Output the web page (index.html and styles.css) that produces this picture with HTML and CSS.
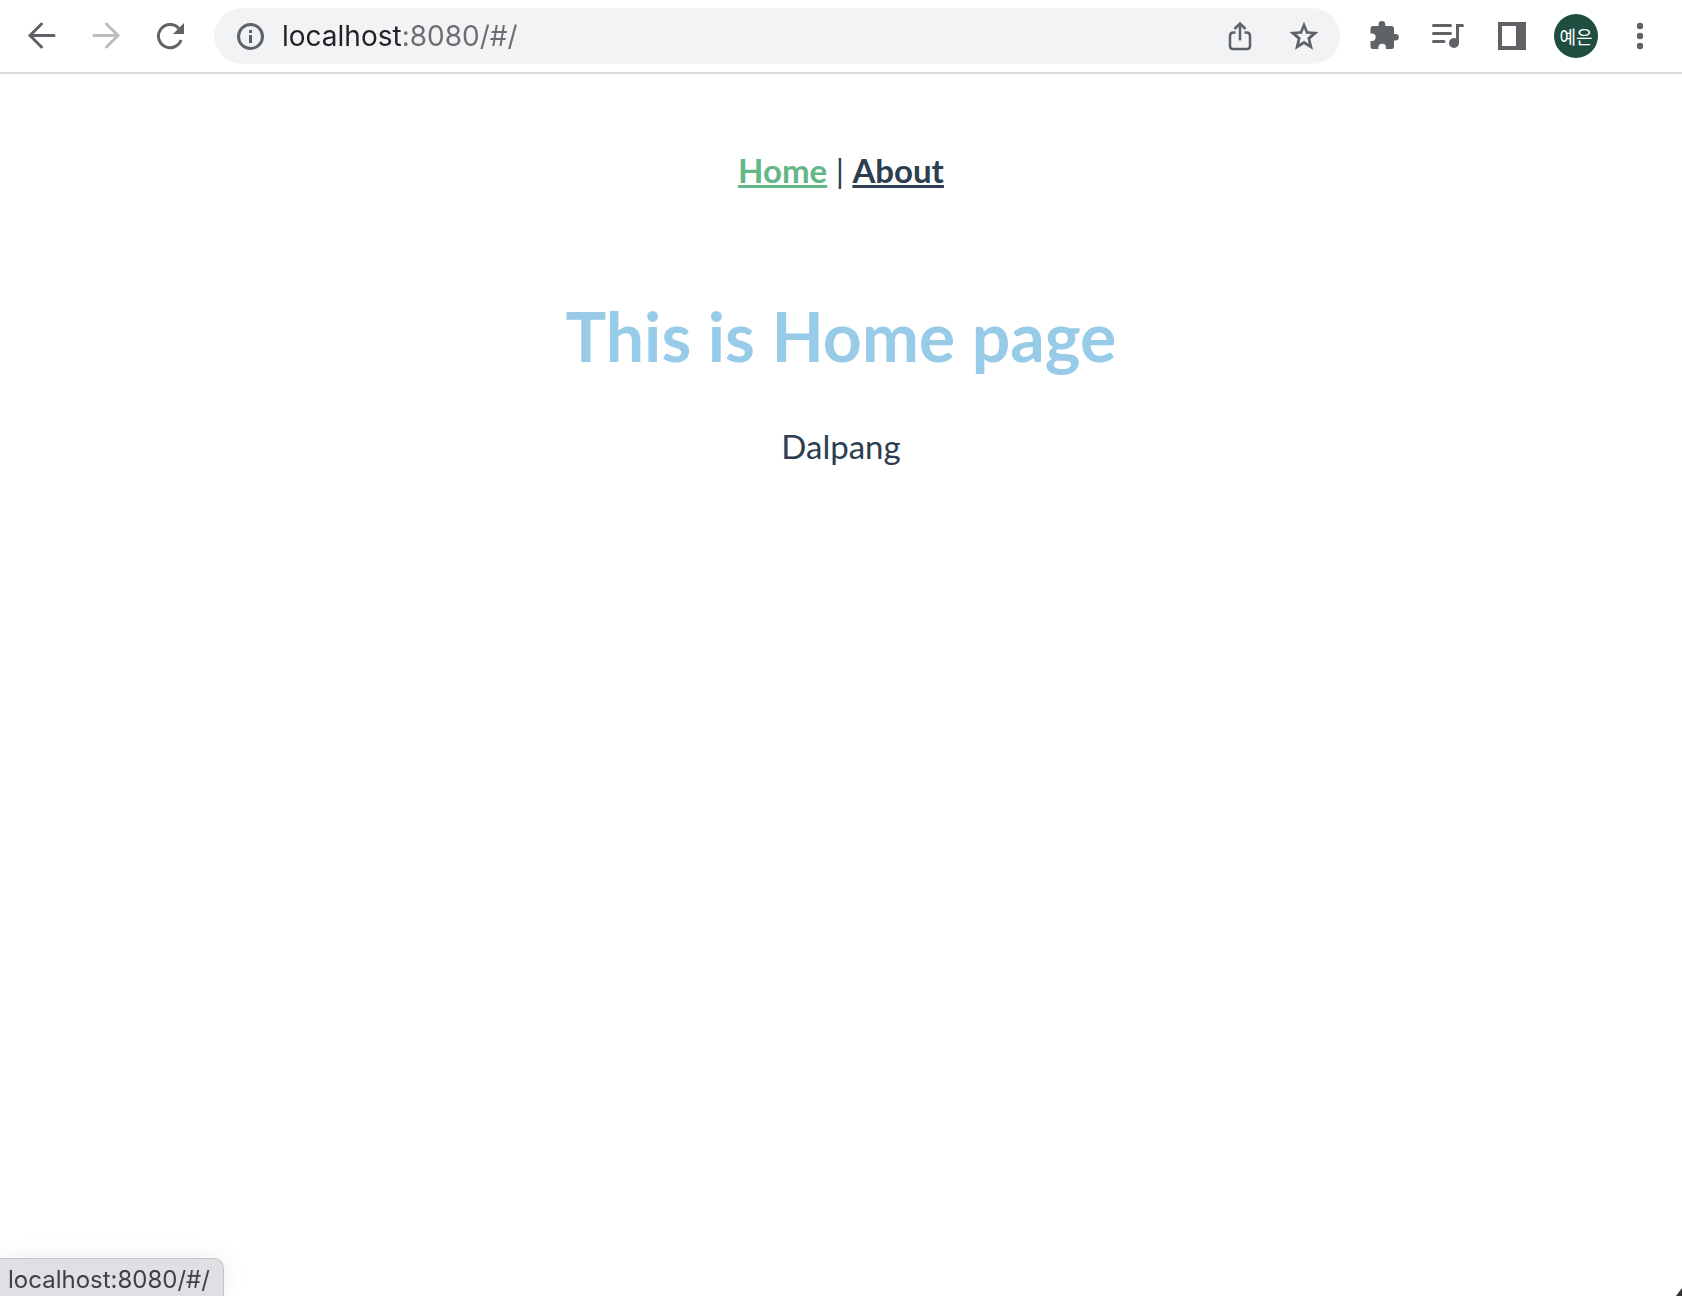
FILE: index.html
```
<!DOCTYPE html>
<html lang="en">
<head>
    <meta charset="UTF-8">
    <meta name="viewport" content="width=device-width, initial-scale=1.0">
    <title>Home</title>
    <link rel="stylesheet" href="styles.css">
</head>
<body>

<header class="toolbar">
    <button class="tool" aria-label="Back">
        <svg viewBox="0 0 32 32" class="stroke"><path d="M28 15.500H5M15.500 4 4 15.500 15.500 27"/></svg>
    </button>
    <button class="tool" aria-label="Forward" disabled>
        <svg viewBox="0 0 32 32" class="stroke"><path d="M4 15.500H27M16.500 4 28 15.500 16.500 27"/></svg>
    </button>
    <button class="tool" aria-label="Reload">
        <svg viewBox="0 0 32 32"><path class="line" d="M27 20A11.600 11.600 0 1 1 24.800 8.500"/><path d="M30 3V14H19z"/></svg>
    </button>

    <form class="omnibox">
        <button type="button" class="omni-btn" aria-label="Site information">
            <svg viewBox="0 0 32 32"><circle class="line" cx="16.500" cy="16.500" r="12"/><path d="M15 10h3v3h-3zM15 15h3v8h-3z"/></svg>
        </button>
        <input class="url" type="text" aria-label="Address" value="localhost:8080/#/">
        <button type="button" class="omni-btn wide" aria-label="Share">
            <svg viewBox="0 0 32 32"><path class="line thin" d="M11.500 12.500H9.500Q6 12.500 6 16V26Q6 29 9 29H23Q26 29 26 26V16Q26 12.500 22.500 12.500H20.500M16 20.500V4M10.500 9 16 3.500 21.500 9"/></svg>
        </button>
        <button type="button" class="omni-btn wide" aria-label="Bookmark">
            <svg viewBox="0 0 32 32"><path fill-rule="evenodd" d="M16 1.500 19.900 11.200 30.500 12 22.400 18.900 25 29.700 16 24.200 7 29.700 9.600 18.900 1.500 12 12.100 11.200zM16 8.500 13.900 13.700 8.400 14.100 12.600 17.800 11.300 23.700 16 20.800 20.700 23.700 19.400 17.800 23.600 14.100 18.100 13.700z"/></svg>
        </button>
    </form>

    <button class="tool" aria-label="Extensions">
        <svg viewBox="0 0 32 32"><path d="M4.500 6H10.500V4.500A3.400 3.400 0 0 1 17.300 4.500V6H23.500Q26 6 26 8.500V14H27.500A3.300 3.300 0 0 1 27.500 20.600H26V26.500Q26 29 23.500 29H18V27.500A3.800 3.800 0 0 0 10.400 27.500V29H4.500Q2.500 29 2.500 26.500V21H4A3.700 3.700 0 0 0 4 13.600H2.500V8.500Q2.500 6 4.500 6z"/></svg>
    </button>
    <button class="tool" aria-label="Media controls">
        <svg viewBox="0 0 32 32"><path class="line round" d="M1.500 5.500H18.500M1.500 13.500H18.500M1.500 21.500H12M25.500 22.500V5.500H30.500"/><circle cx="22" cy="23" r="5"/></svg>
    </button>
    <button class="tool" aria-label="Side panel">
        <svg viewBox="0 0 32 32"><path fill-rule="evenodd" d="M2 2H30V30H2zM6 6V26H20V6z"/></svg>
    </button>
    <button class="tool" aria-label="Profile"><span class="avatar" lang="ko">예은</span></button>
    <button class="tool" aria-label="Menu">
        <svg viewBox="0 0 32 32"><circle cx="16" cy="6" r="3.200"/><circle cx="16" cy="16" r="3.200"/><circle cx="16" cy="26" r="3.200"/></svg>
    </button>
</header>

<div id="app">
    <nav>
        <a href="#/" class="active">Home</a> |
        <a href="#/about">About</a>
    </nav>
    <main class="home">
        <h1>This is Home page</h1>
        <p>Dalpang</p>
    </main>
</div>

<div class="status">localhost:8080/#/</div>
<div class="corner"></div>

</body>
</html>
```
FILE: styles.css
```
body {
    margin: 0;
    background-color: #fff;
    color: #2c3e50;
    font-family: Lato, Arial, sans-serif;
}

/* Browser toolbar */
.toolbar {
    display: flex;
    align-items: center;
    box-sizing: border-box;
    height: 74px;
    padding: 0 10px;
    border-bottom: 2px solid #dadbdc;
    font-family: Inter, "Noto Sans CJK KR", sans-serif;
}
button {
    display: flex;
    align-items: center;
    justify-content: center;
    padding: 0;
    border: none;
    background: none;
    color: #5f6368;
    font-family: inherit;
    cursor: pointer;
}
.tool {
    width: 64px;
    height: 64px;
}
.tool:disabled {
    color: #babcbe;
}
svg {
    width: 32px;
    height: 32px;
    fill: currentColor;
}
.stroke,
.line {
    fill: none;
    stroke: currentColor;
    stroke-width: 3;
}
.stroke {
    stroke-linecap: round;
}
.thin {
    stroke-width: 2.5;
}
.round {
    stroke-linecap: round;
}
.omnibox {
    display: flex;
    align-items: center;
    flex: 1;
    min-width: 0;
    height: 56px;
    margin: 0 12px;
    padding: 0 4px 0 16px;
    box-sizing: border-box;
    border-radius: 28px;
    background-color: #f1f3f4;
}
.omni-btn {
    width: 40px;
    height: 48px;
}
.omni-btn.wide {
    width: 64px;
}
.url {
    flex: 1;
    min-width: 0;
    height: 40px;
    margin-left: 12px;
    padding: 0;
    border: none;
    outline: none;
    font-family: inherit;
    font-size: 28px;
    /* host is darker than the port and path */
    background: linear-gradient(to right, #202124 121px, #6b6d70 121px);
    -webkit-background-clip: text;
    background-clip: text;
    -webkit-text-fill-color: transparent;
}
.avatar {
    width: 44px;
    height: 44px;
    border-radius: 50%;
    background-color: #1f4d40;
    color: #fff;
    font-family: "Noto Sans CJK KR", sans-serif;
    font-size: 18px;
    line-height: 44px;
}

/* Page */
#app {
    font-size: 33px;
    line-height: 44px;
    text-align: center;
}
nav {
    padding: 74px 60px 60px;
}
nav a {
    color: #2c3e50;
    font-weight: bold;
}
nav a.active {
    color: #64b687;
}
h1 {
    margin: 42px 0 46px;
    color: #97cbe8;
    font-size: 68px;
    line-height: 84px;
}
p {
    margin: 0;
}

/* Link preview in the window corner */
.status {
    position: fixed;
    left: 0;
    bottom: 0;
    padding: 5px 13px 0 8px;
    border: 1px solid #c4c6c8;
    border-width: 1px 1px 0 0;
    border-radius: 0 10px 0 0;
    background-color: #dfe0e4;
    box-shadow: 0 0 24px rgba(0, 0, 0, 0.08);
    color: #3f4144;
    font-family: Inter, sans-serif;
    font-size: 24px;
    line-height: 32px;
}
.corner {
    position: fixed;
    right: 0;
    bottom: 0;
    width: 6px;
    height: 8px;
    background-color: #333;
    clip-path: polygon(100% 0, 100% 100%, 0 100%);
}
```
